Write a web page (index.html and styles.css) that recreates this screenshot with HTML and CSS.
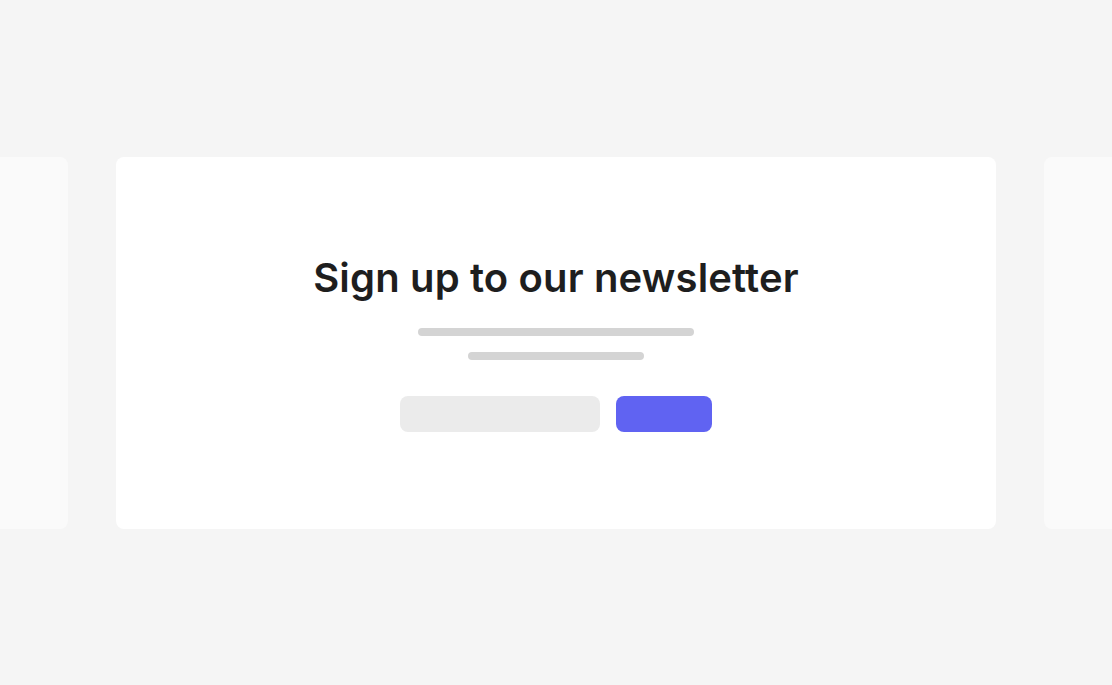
FILE: index.html
```html
<!DOCTYPE html>
<html lang="en">
<head>
    <meta charset="UTF-8">
    <meta name="viewport" content="width=device-width, initial-scale=1.0">
    <title>Newsletter</title>
    <link rel="stylesheet" href="styles.css">
</head>
<body>
    <div class="slider">
        <div class="slide-peek slide-peek-left"></div>

        <div class="slide">
            <h2>Sign up to our newsletter</h2>
            <div class="line line-long"></div>
            <div class="line line-short"></div>
            <div class="signup-form">
                <div class="email-input"></div>
                <div class="submit-button"></div>
            </div>
        </div>

        <div class="slide-peek slide-peek-right"></div>
    </div>
</body>
</html>
```

FILE: styles.css
```css
body {
    font-family: Inter, "Noto Sans", sans-serif;
    background-color: #f5f5f5;
    display: flex;
    justify-content: center;
    align-items: center;
    height: 100vh;
    margin: 0;
    overflow: hidden;
}

.slider {
    display: flex;
    gap: 48px;
    width: 100%;
}

.slide {
    flex: 0 0 880px;
    height: 372px;
    background-color: #fff;
    border-radius: 8px;
    display: flex;
    flex-direction: column;
    align-items: center;
    justify-content: center;
}

/* neighbour slides, only their edges are visible */
.slide-peek {
    flex: 1;
    height: 372px;
    background-color: #fafafa;
}

.slide-peek-left {
    border-radius: 0 8px 8px 0;
}

.slide-peek-right {
    border-radius: 8px 0 0 8px;
}

.slide h2 {
    margin: 0 0 26px;
    font-size: 40px;
    line-height: 48px;
    font-weight: 600;
    letter-spacing: 0.15px;
    color: #1e1e1e;
}

.line {
    height: 8px;
    border-radius: 4px;
    background-color: #d4d4d4;
}

.line-long {
    width: 276px;
    margin-bottom: 16px;
}

.line-short {
    width: 176px;
}

.signup-form {
    display: flex;
    gap: 16px;
    margin-top: 36px;
}

.email-input {
    width: 200px;
    height: 36px;
    border-radius: 8px;
    background-color: #ebebeb;
}

.submit-button {
    width: 96px;
    height: 36px;
    border-radius: 8px;
    background-color: #6063f2;
}
```
